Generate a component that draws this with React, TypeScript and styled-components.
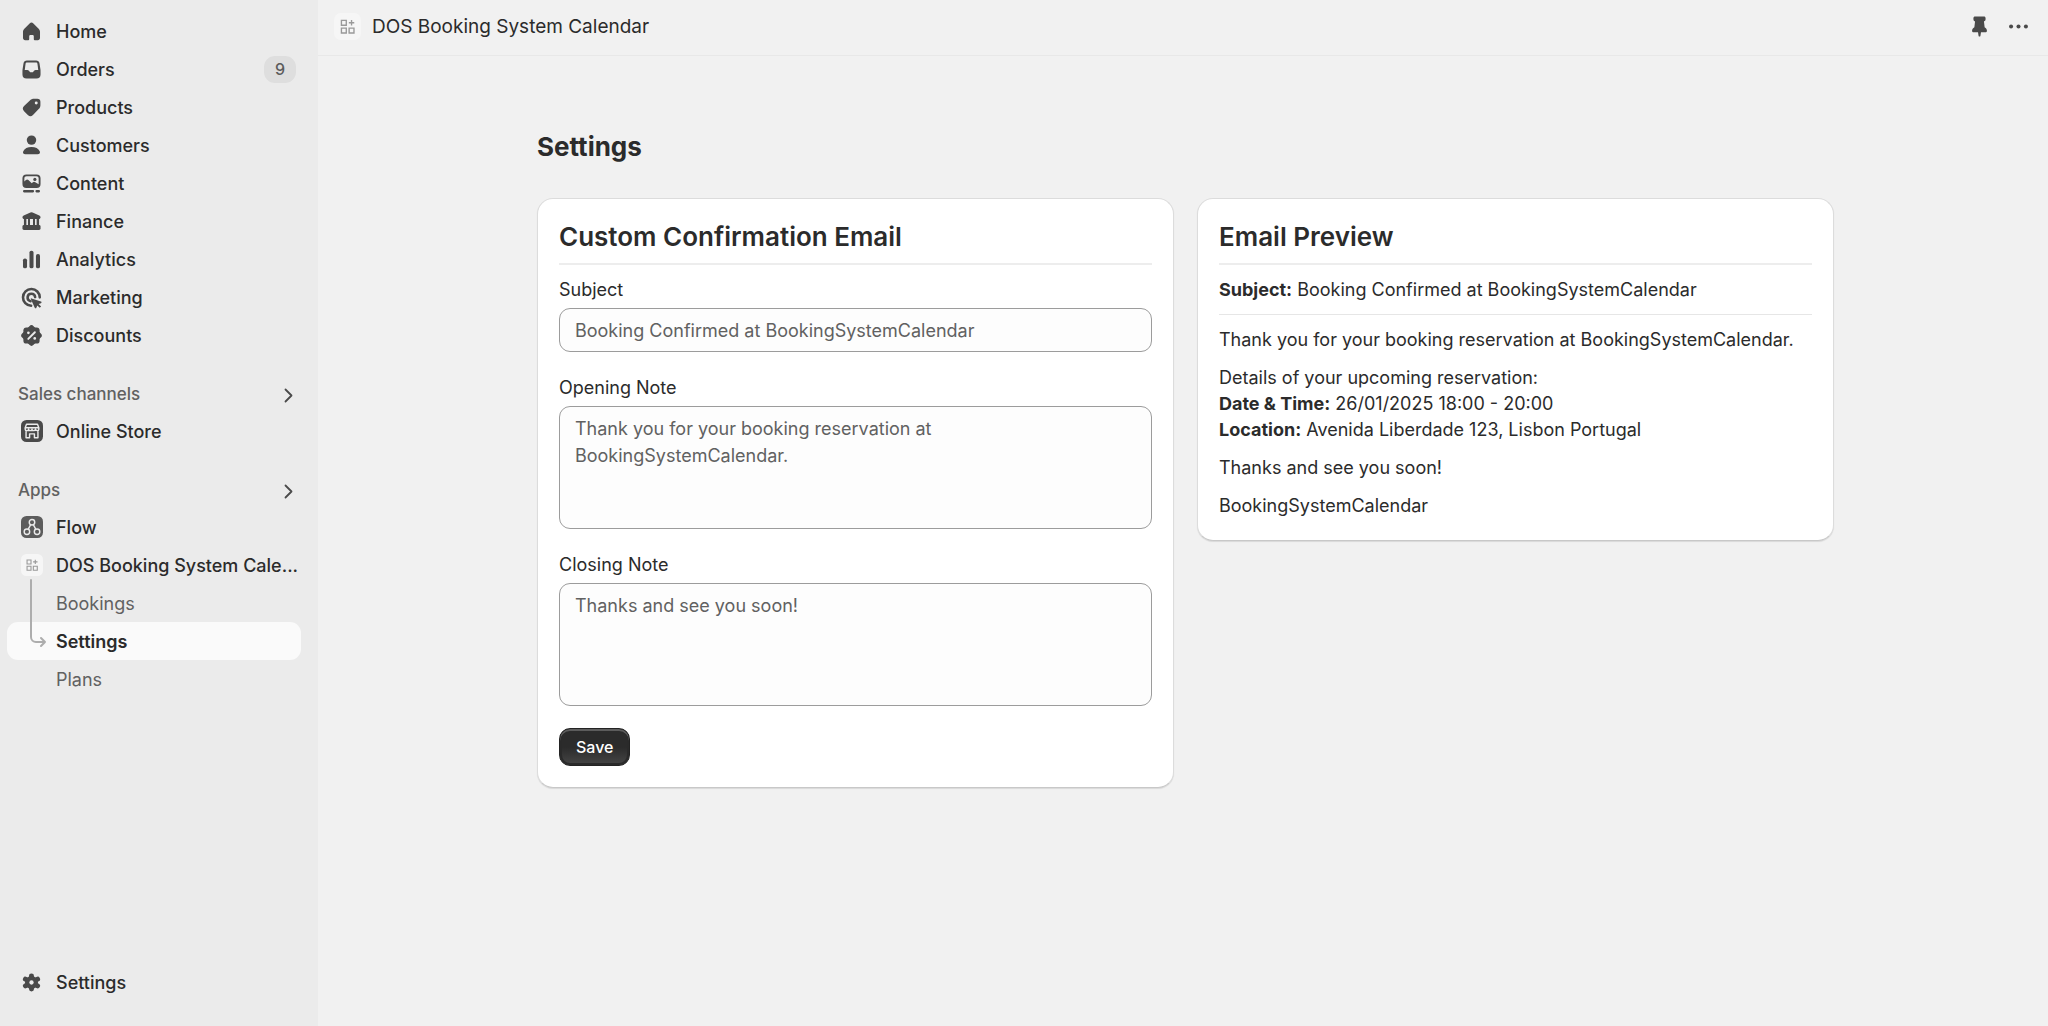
import React, { useState } from 'react';
import styled, { createGlobalStyle } from 'styled-components';

const GlobalStyle = createGlobalStyle`
  *, *::before, *::after { box-sizing: border-box; }
  body {
    margin: 0;
    background: #f1f1f1;
    color: #2b2b2b;
    font-family: Inter, "Liberation Sans", sans-serif;
    font-size: 18px;
    line-height: 27px;
    -webkit-font-smoothing: antialiased;
  }
`;

const Shell = styled.div`
  display: grid;
  grid-template-columns: 318px minmax(0, 1fr);
  min-height: 100vh;
`;

const Sidebar = styled.nav`
  display: flex;
  flex-direction: column;
  padding: 12px 17px 25px 7px;
  background: #ebebeb;
`;

const List = styled.ul`
  margin: 0;
  padding: 0;
  list-style: none;
`;

const BottomList = styled(List)`
  margin-top: auto;
`;

const Section = styled.section`
  margin-top: 22px;
`;

const SectionHead = styled.button`
  display: flex;
  align-items: center;
  justify-content: space-between;
  width: 100%;
  height: 36px;
  padding: 0 3px 0 11px;
  border: 0;
  background: none;
  color: #616161;
  font: inherit;
  font-size: 17px;
  font-weight: 500;
  text-align: left;
`;

const NavLink = styled.a<{ $active?: boolean; $sub?: boolean }>`
  display: flex;
  gap: 11px;
  align-items: center;
  height: 38px;
  padding: 0 5px 0 11px;
  border-radius: 11px;
  background: ${(p) => (p.$active ? '#fafafa' : 'transparent')};
  color: ${(p) => (p.$sub && !p.$active ? '#616161' : '#2b2b2b')};
  font-weight: ${(p) => (p.$active ? 600 : p.$sub ? 400 : 500)};
  text-decoration: none;
`;

const IconSlot = styled.span`
  display: grid;
  flex: none;
  place-items: center;
  width: 27px;
`;

const NavText = styled.span`
  flex: 1;
  white-space: nowrap;
`;

const Badge = styled.span`
  min-width: 32px;
  border-radius: 11px;
  background: #dedede;
  color: #5c5c5c;
  font-size: 16px;
  font-weight: 500;
  text-align: center;
`;

const Icon = styled.svg<{ $size?: number }>`
  display: block;
  width: ${(p) => p.$size ?? 27}px;
  height: ${(p) => p.$size ?? 27}px;
  color: #4a4a4a;
`;

const SubList = styled(List)`
  position: relative;
`;

const Branch = styled.svg`
  position: absolute;
  top: -5px;
  left: 22px;
  width: 18px;
  height: 72px;
  pointer-events: none;
`;

const Content = styled.div`
  display: flex;
  flex-direction: column;
`;

const TopBar = styled.header`
  display: flex;
  align-items: center;
  gap: 11px;
  height: 56px;
  padding: 0 16px 3px;
  border-bottom: 1px solid #e8e8e8;
  font-size: 19px;
`;

const TopActions = styled.div`
  display: flex;
  gap: 12px;
  margin-left: auto;
`;

const IconButton = styled.button`
  padding: 0;
  border: 0;
  background: none;
`;

const Page = styled.main`
  width: 100%;
  max-width: 1346px;
  margin: 0 auto;
  padding: 74px 22px 32px 27px;
`;

const Title = styled.h1`
  margin: 0 0 35px;
  font-size: 26px;
  font-weight: 700;
  line-height: 33px;
`;

const Columns = styled.div`
  display: grid;
  grid-template-columns: repeat(auto-fit, minmax(420px, 1fr));
  gap: 23px;
  align-items: start;
`;

const Card = styled.section`
  padding: 21px;
  border: 1px solid #dcdcdc;
  border-bottom-color: #c8c8c8;
  border-radius: 16px;
  background: #fff;
  box-shadow: 0 1px 1px rgba(0, 0, 0, 0.1);
`;

const CardTitle = styled.h2`
  margin: 0;
  padding-bottom: 10px;
  border-bottom: 2px solid #ededed;
  font-size: 26px;
  font-weight: 600;
  line-height: 33px;
`;

const Form = styled.form`
  display: flex;
  flex-direction: column;
  gap: 22px;
  margin-top: 11px;
`;

const Field = styled.div`
  display: flex;
  flex-direction: column;
  gap: 5px;
`;

const TextInput = styled.input`
  width: 100%;
  height: 44px;
  padding: 0 15px;
  border: 1px solid #9c9c9c;
  border-radius: 11px;
  background: #fdfdfd;
  color: #616161;
  font: inherit;
`;

const TextBox = styled.textarea`
  display: block;
  width: 100%;
  height: 123px;
  padding: 8px 15px;
  border: 1px solid #9c9c9c;
  border-radius: 11px;
  background: #fdfdfd;
  color: #616161;
  font: inherit;
  resize: none;
`;

const SaveButton = styled.button`
  align-self: flex-start;
  height: 38px;
  padding: 0 16px;
  border: 1px solid #232323;
  border-radius: 11px;
  background: linear-gradient(#2b2b2b 50%, #464646);
  box-shadow: inset 0 2px 0 #5c5c5c, inset 0 0 0 2px #2a2a2a;
  color: #fff;
  font: inherit;
  font-size: 16px;
  font-weight: 500;
`;

const PreviewSubject = styled.p`
  margin: 0;
  padding: 12px 0 11px;
  border-bottom: 1px solid #e6e6e6;
  line-height: 26px;
`;

const PreviewBody = styled.div`
  display: flex;
  flex-direction: column;
  gap: 12px;
  padding-top: 12px;
  line-height: 26px;
`;

const Paragraph = styled.p`
  margin: 0;
`;

type IconName =
  | 'home' | 'orders' | 'products' | 'customers' | 'content' | 'finance'
  | 'analytics' | 'marketing' | 'discounts' | 'settings' | 'store' | 'flow'
  | 'app' | 'pin' | 'more' | 'chevron';

const glyphs: Record<IconName, React.ReactNode> = {
  home: (
    <path fill="currentColor" d="M8.6 4.1a2 2 0 0 1 2.8 0l3.9 3.8c.6.6 1 1.4 1 2.3v4.7c0 .9-.7 1.6-1.6 1.6h-2.3a.7.7 0 0 1-.7-.7v-2.2c0-.6-.5-1-1.1-1h-1.2c-.6 0-1.1.4-1.1 1v2.2a.7.7 0 0 1-.7.7H5.3c-.9 0-1.6-.7-1.6-1.6v-4.7c0-.9.4-1.7 1-2.3l3.9-3.8Z" />
  ),
  orders: (
    <path fill="currentColor" fillRule="evenodd" d="M6.6 3.3h6.8a2.6 2.6 0 0 1 2.5 2.1l.7 4.4c.1.5.1 1 .1 1.5v2.4a3 3 0 0 1-3 3H6.3a3 3 0 0 1-3-3v-2.4c0-.5 0-1 .1-1.5l.7-4.4a2.6 2.6 0 0 1 2.5-2.1Zm.1 1.5c-.6 0-1 .4-1.1 1L5 10.300h1.900c.5 0 .9.2 1.2.6l.6.8c.2.3.5.4.8.4h1c.3 0 .6-.1.8-.4l.6-.8c.3-.4.7-.6 1.2-.6H15l-.6-4.500c-.1-.6-.5-1-1.100-1H6.700Z" />
  ),
  products: (
    <path fill="currentColor" fillRule="evenodd" d="M11.800 3.500h2.500a2.300 2.300 0 0 1 2.300 2.300v2.500c0 1.100-.4 2-1.100 2.700l-4.400 4.500a2.700 2.700 0 0 1-3.800 0l-2.800-2.800a2.700 2.700 0 0 1 0-3.800l4.500-4.300c.8-.7 1.700-1.100 2.800-1.100Zm1.700 4.200a1.100 1.100 0 1 0 0-2.200 1.100 1.100 0 0 0 0 2.200Z" />
  ),
  customers: (
    <g fill="currentColor">
      <circle cx="10" cy="6" r="3.5" />
      <path d="M10 11.200c-2.900 0-5.200 1.200-6.100 3-.6 1.200.3 2.300 1.500 2.300h9.200c1.200 0 2.100-1.100 1.500-2.300-.9-1.800-3.200-3-6.100-3Z" />
    </g>
  ),
  content: (
    <g fill="currentColor">
      <path fillRule="evenodd" d="M6.200 3.300h7.600a2.900 2.900 0 0 1 2.900 2.900v4.200a2.900 2.900 0 0 1-2.900 2.900H6.200a2.900 2.900 0 0 1-2.900-2.900V6.200a2.900 2.900 0 0 1 2.900-2.900Zm.1 1.400c-.9 0-1.600.7-1.600 1.600v2.200l1.200-1.100a1.300 1.300 0 0 1 1.800 0l2.500 2.500.8-.8a1.300 1.300 0 0 1 1.800 0l2.500 1.500V6.300c0-.9-.7-1.600-1.600-1.600H6.300Z" />
      <circle cx="12.500" cy="7" r="1.200" />
      <rect x="3.700" y="14.900" width="8.200" height="1.700" rx=".8" />
      <rect x="12.900" y="14.900" width="3.400" height="1.700" rx=".8" />
    </g>
  ),
  finance: (
    <g fill="currentColor">
      <path d="M9.200 3.300a2 2 0 0 1 1.600 0l5 2.300c.6.300.9.800.9 1.300 0 .8-.6 1.300-1.300 1.300H4.600c-.7 0-1.300-.5-1.300-1.300 0-.5.3-1 .9-1.300l5-2.300Z" />
      <path d="M4.400 8h1.800v5.500H4.400zM7.400 8h1.500v5.500H7.400zM11.100 8h1.500v5.500h-1.500zM13.800 8h1.800v5.500h-1.800z" />
      <rect x="3.300" y="12.600" width="13.400" height="3.700" rx="1.100" />
    </g>
  ),
  analytics: (
    <g fill="currentColor">
      <rect x="3.700" y="9.200" width="3" height="7.300" rx="1.400" />
      <rect x="8.500" y="3.500" width="3" height="13" rx="1.400" />
      <rect x="13.300" y="6" width="3" height="10.500" rx="1.400" />
    </g>
  ),
  marketing: (
    <>
      <g fill="none" stroke="currentColor" strokeWidth="1.900" strokeLinecap="round">
        <path d="M9.700 16.100a6.200 6.200 0 1 1 6.400-6.200" />
        <path d="M9.300 12.700a2.800 2.800 0 1 1 3.400-3" />
      </g>
      <path fill="currentColor" d="m10 10.700 7 2.300c.6.200.6 1 0 1.200l-1.700.7 1.800 1.700-1 1-1.800-1.700-.7 1.600c-.2.600-1 .5-1.200 0l-2.900-6.300c-.2-.4.100-.7.500-.5Z" />
    </>
  ),
  discounts: (
    <>
      <g fill="currentColor">
        <rect x="4" y="4" width="12" height="12" rx="2.200" />
        <rect x="4" y="4" width="12" height="12" rx="2.200" transform="rotate(45 10 10)" />
      </g>
      <path stroke="#ebebeb" strokeWidth="1.400" strokeLinecap="round" d="m7.600 12.500 4.900-4.900" />
      <circle cx="7.700" cy="8" r="1" fill="#ebebeb" />
      <circle cx="12.400" cy="12.200" r="1" fill="#ebebeb" />
    </>
  ),
  settings: (
    <>
      <g stroke="currentColor" strokeWidth="3.700" strokeLinecap="round">
        <path d="M10 5.100v9.800M5.500 7.500l9 5M14.500 7.500l-9 5" />
      </g>
      <circle cx="10" cy="10" r="4.800" fill="currentColor" />
      <circle cx="10" cy="10" r="1.600" fill="#ebebeb" />
    </>
  ),
  store: (
    <>
      <rect width="20" height="20" rx="5" fill="currentColor" />
      <path fill="none" stroke="#ebebeb" strokeWidth="1.300" strokeLinejoin="round" d="M5 3.900h10l1.200 3.200v1.200c0 1.800-3 1.800-3.100 0 0 1.800-3.100 1.800-3.100 0 0 1.800-3.100 1.800-3.100 0 0 1.800-3.100 1.800-3.100 0V7.100L5 3.900ZM3.900 7h12.200M4.600 10v6.200h3.200v-3.600h4.400v3.600h3.200V10" />
    </>
  ),
  flow: (
    <>
      <rect width="20" height="20" rx="5" fill="#5c5c5c" />
      <g fill="none" stroke="#ebebeb" strokeWidth="1.300">
        <circle cx="10" cy="5.600" r="2.500" />
        <circle cx="5.400" cy="14.300" r="2.500" />
        <circle cx="14.600" cy="14.300" r="2.500" />
        <path d="M8.800 7.800 6.600 12M11.200 7.800l2.200 4.200" />
      </g>
    </>
  ),
  app: (
    <>
      <rect width="20" height="20" rx="5" fill="#f6f6f6" />
      <g fill="none" stroke="#999" strokeWidth="1">
        <path d="M5.500 5.500h3.600v3.600H5.500zM5.500 11.200h3.600v3.600H5.500zM11.200 11.200h3.600v3.600h-3.600zM13 5.200v4M11 7.200h4" />
      </g>
    </>
  ),
  pin: (
    <path fill="currentColor" d="M6.700 2.600h6.600c.7 0 1.200.5 1.200 1.200v.9c0 .8-.5 1.400-1.200 1.600l.5 4.200c1.100.5 1.700 1.500 1.700 2.600 0 .7-.5 1.200-1.200 1.200h-3.200l-.4 2.500c-.1.900-1.300.9-1.400 0l-.4-2.500H5.700c-.7 0-1.200-.5-1.200-1.200 0-1.100.6-2.100 1.700-2.600l.5-4.200a1.600 1.600 0 0 1-1.200-1.600v-.9c0-.7.5-1.200 1.200-1.200Z" />
  ),
  more: (
    <g fill="currentColor">
      <circle cx="4.500" cy="10" r="1.500" />
      <circle cx="10" cy="10" r="1.500" />
      <circle cx="15.500" cy="10" r="1.500" />
    </g>
  ),
  chevron: (
    <path fill="none" stroke="currentColor" strokeWidth="1.800" strokeLinecap="round" strokeLinejoin="round" d="m7.500 5.500 6 6-6 6" />
  ),
};

const Glyph = ({ name, size }: { name: IconName; size?: number }) => (
  <Icon $size={size} viewBox="0 0 20 20" aria-hidden="true">
    {glyphs[name]}
  </Icon>
);

const mainLinks: { label: string; icon: IconName; count?: number }[] = [
  { label: 'Home', icon: 'home' },
  { label: 'Orders', icon: 'orders', count: 9 },
  { label: 'Products', icon: 'products' },
  { label: 'Customers', icon: 'customers' },
  { label: 'Content', icon: 'content' },
  { label: 'Finance', icon: 'finance' },
  { label: 'Analytics', icon: 'analytics' },
  { label: 'Marketing', icon: 'marketing' },
  { label: 'Discounts', icon: 'discounts' },
];

const NavItem = ({ label, icon, count, size }: { label: string; icon: IconName; count?: number; size?: number }) => (
  <li>
    <NavLink href="#">
      <IconSlot>
        <Glyph name={icon} size={size} />
      </IconSlot>
      <NavText>{label}</NavText>
      {count !== undefined && <Badge>{count}</Badge>}
    </NavLink>
  </li>
);

const SubItem = ({ label, active }: { label: string; active?: boolean }) => (
  <li>
    <NavLink href="#" $sub $active={active} aria-current={active ? 'page' : undefined}>
      <IconSlot />
      <NavText>{label}</NavText>
    </NavLink>
  </li>
);

export default function App() {
  const [subject, setSubject] = useState('Booking Confirmed at BookingSystemCalendar');
  const [opening, setOpening] = useState('Thank you for your booking reservation at BookingSystemCalendar.');
  const [closing, setClosing] = useState('Thanks and see you soon!');

  return (
    <>
      <GlobalStyle />
      <Shell>
        <Sidebar aria-label="Main">
          <List>
            {mainLinks.map((link) => (
              <NavItem key={link.label} {...link} />
            ))}
          </List>
          <Section>
            <SectionHead type="button">
              Sales channels
              <Glyph name="chevron" size={20} />
            </SectionHead>
            <List>
              <NavItem label="Online Store" icon="store" size={22} />
            </List>
          </Section>
          <Section>
            <SectionHead type="button">
              Apps
              <Glyph name="chevron" size={20} />
            </SectionHead>
            <List>
              <NavItem label="Flow" icon="flow" size={22} />
              <NavItem label="DOS Booking System Cale..." icon="app" size={22} />
            </List>
            <SubList>
              <SubItem label="Bookings" />
              <SubItem label="Settings" active />
              <SubItem label="Plans" />
              <Branch as="li" aria-hidden="true">
                <svg width="18" height="72" viewBox="0 0 18 72" fill="none" stroke="#adadad" strokeWidth="2" strokeLinecap="round" strokeLinejoin="round">
                  <path d="M2 1v57a5 5 0 0 0 5 5h9M12 59l4 4-4 4" />
                </svg>
              </Branch>
            </SubList>
          </Section>
          <BottomList>
            <NavItem label="Settings" icon="settings" />
          </BottomList>
        </Sidebar>
        <Content>
          <TopBar>
            <Glyph name="app" />
            <span>DOS Booking System Calendar</span>
            <TopActions>
              <IconButton type="button" aria-label="Pin">
                <Glyph name="pin" />
              </IconButton>
              <IconButton type="button" aria-label="More actions">
                <Glyph name="more" />
              </IconButton>
            </TopActions>
          </TopBar>
          <Page>
            <Title>Settings</Title>
            <Columns>
              <Card>
                <CardTitle>Custom Confirmation Email</CardTitle>
                <Form onSubmit={(e) => e.preventDefault()}>
                  <Field>
                    <label htmlFor="subject">Subject</label>
                    <TextInput id="subject" value={subject} onChange={(e) => setSubject(e.target.value)} />
                  </Field>
                  <Field>
                    <label htmlFor="opening">Opening Note</label>
                    <TextBox id="opening" value={opening} onChange={(e) => setOpening(e.target.value)} />
                  </Field>
                  <Field>
                    <label htmlFor="closing">Closing Note</label>
                    <TextBox id="closing" value={closing} onChange={(e) => setClosing(e.target.value)} />
                  </Field>
                  <SaveButton type="submit">Save</SaveButton>
                </Form>
              </Card>
              <Card>
                <CardTitle>Email Preview</CardTitle>
                <PreviewSubject>
                  <strong>Subject:</strong> {subject}
                </PreviewSubject>
                <PreviewBody>
                  <Paragraph>{opening}</Paragraph>
                  <Paragraph>
                    Details of your upcoming reservation:
                    <br />
                    <strong>Date &amp; Time:</strong> 26/01/2025 18:00 - 20:00
                    <br />
                    <strong>Location:</strong> Avenida Liberdade 123, Lisbon Portugal
                  </Paragraph>
                  <Paragraph>{closing}</Paragraph>
                  <Paragraph>BookingSystemCalendar</Paragraph>
                </PreviewBody>
              </Card>
            </Columns>
          </Page>
        </Content>
      </Shell>
    </>
  );
}
